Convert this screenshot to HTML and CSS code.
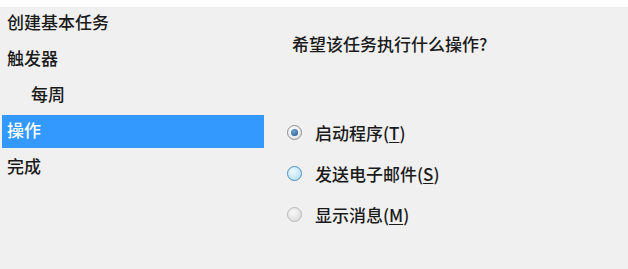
FILE: index.html
```html
<!DOCTYPE html>
<html lang="zh-CN">
    <head>
        <meta charset="UTF-8">
        <title>创建基本任务向导</title>
        <link rel="stylesheet" href="styles.css">
    </head>
    <body>
        <div class="topstrip"></div>
        <div class="wizard">
            <div class="steps">
                <div class="step">创建基本任务</div>
                <div class="step">触发器</div>
                <div class="step sub">每周</div>
                <div class="step selected">操作</div>
                <div class="step">完成</div>
            </div>
            <div class="content">
                <div class="question">希望该任务执行什么操作?</div>
                <div class="options">
                    <div class="option">
                        <span class="radio checked"></span>
                        <span class="label">启动程序(<u>T</u>)</span>
                    </div>
                    <div class="option">
                        <span class="radio hover"></span>
                        <span class="label">发送电子邮件(<u>S</u>)</span>
                    </div>
                    <div class="option">
                        <span class="radio dim"></span>
                        <span class="label">显示消息(<u>M</u>)</span>
                    </div>
                </div>
            </div>
        </div>
    </body>
</html>
```

FILE: styles.css
```css
html, body {
    margin: 0;
    padding: 0;
    height: 100%;
}

body {
    background: #f0f0f0;
    color: #1a1a1a;
    font-family: "Noto Sans CJK SC", "Microsoft YaHei", sans-serif;
    font-size: 17px;
    font-weight: 500;
    overflow: hidden;
}

.topstrip {
    height: 7px;
    background: #fff;
}

.wizard {
    display: flex;
}

.steps {
    width: 262px;
    display: flex;
    flex-direction: column;
    gap: 3px;
    padding-left: 2px;
}

.step {
    height: 33px;
    line-height: 29px;
    padding-left: 5px;
}

.step.sub {
    padding-left: 29px;
}

.step.selected {
    background: #3399ff;
    color: #fff;
}

.content {
    padding-left: 28px;
    padding-top: 25px;
}

.question {
    line-height: 24px;
}

.options {
    margin-top: 56px;
    margin-left: -5px;
    display: flex;
    flex-direction: column;
}

.option {
    height: 41px;
    display: flex;
    align-items: center;
    gap: 13px;
}

.label {
    line-height: 24px;
}

.label u {
    text-underline-offset: 2px;
}

.radio {
    width: 13px;
    height: 13px;
    border-radius: 50%;
    border: 1px solid #8f8f8f;
    background: radial-gradient(circle at 40% 35%, #ffffff, #dcdcdc);
    position: relative;
    flex: none;
}

.radio.checked::after {
    content: "";
    position: absolute;
    left: 3px;
    top: 3px;
    width: 7px;
    height: 7px;
    border-radius: 50%;
    background: radial-gradient(circle at 40% 35%, #6fa8d8, #1b4f80);
}

.radio.hover {
    border-color: #4b8ec0;
    background: radial-gradient(circle at 40% 35%, #eefaff, #a6daf2);
}

.radio.dim {
    border-color: #b8b8b8;
    background: radial-gradient(circle at 40% 35%, #f8f8f8, #d6d6d6);
}
```
